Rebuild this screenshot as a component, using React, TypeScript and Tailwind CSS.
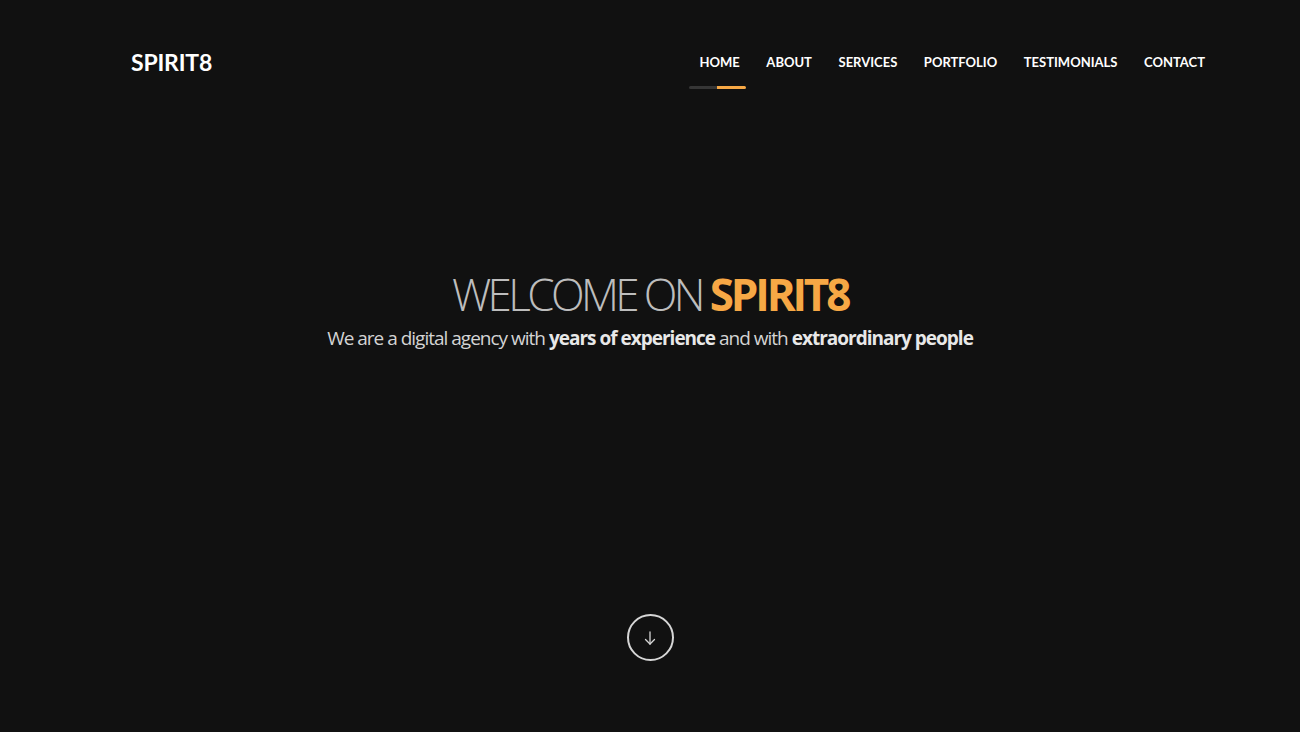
const navItems = ["HOME", "ABOUT", "SERVICES", "PORTFOLIO", "TESTIMONIALS", "CONTACT"];

const App = () => {
  return (
    <div className="w-full h-[732px] bg-[#111111] flex flex-col overflow-hidden">
      {/* header */}
      <header className="h-[124px] flex items-center justify-between pl-[131px] pr-[95px] font-['Lato','Liberation_Sans',sans-serif]">
        <a className="text-white text-[23px] font-bold leading-none tracking-[-0.2px]">SPIRIT8</a>
        <nav className="flex items-center gap-[26.6px]">
          {navItems.map((item, i) => (
            <a key={item} className="relative text-white text-[13px] font-bold leading-5">
              {item}
              {i === 0 && (
                <span className="absolute left-[-10px] top-[34px] flex h-[3px] w-[57px]">
                  <span className="w-[28px] bg-[#363636] rounded-l-sm" />
                  <span className="flex-1 bg-[#f7a845] rounded-r-sm" />
                </span>
              )}
            </a>
          ))}
        </nav>
      </header>

      {/* hero */}
      <section className="flex flex-col items-center pt-[146px] font-['Open_Sans','Liberation_Sans',sans-serif]">
        <h1 className="text-[44px] leading-[48px] font-light text-[#bdbdbd] tracking-[-3.6px]">
          WELCOME ON <span className="font-bold text-[#f7a845] tracking-[-3.2px]">SPIRIT8</span>
        </h1>
        <p className="mt-[6px] text-[19px] leading-7 text-[#d4d4d4] tracking-[-1px]">
          We are a digital agency with <b className="font-bold text-[#e8e8e8]">years of experience</b> and with{" "}
          <b className="font-bold text-[#e8e8e8]">extraordinary people</b>
        </p>
        <button className="mt-[262px] w-[47px] h-[47px] rounded-full border-2 border-[#d6d6d6] flex items-center justify-center text-[#d6d6d6]">
          <svg width="12" height="14" viewBox="0 0 12 14" fill="none" stroke="currentColor" strokeWidth="1.3" strokeLinecap="round">
            <path d="M6 1v12" />
            <path d="M1.5 8.5L6 13l4.5-4.5" />
          </svg>
        </button>
      </section>
    </div>
  );
};

export default App;
